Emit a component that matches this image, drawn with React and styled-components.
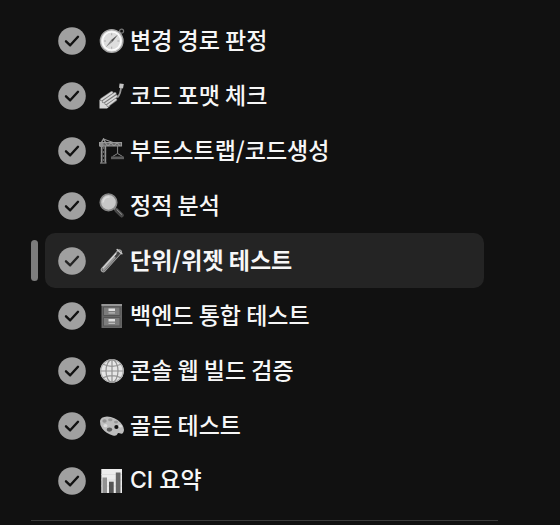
import React from "react";
import styled, { createGlobalStyle } from "styled-components";

const COLORS = {
  page: "#111111",
  active: "#242424",
  marker: "#7d7d7d",
  text: "#f7f7f7",
  badge: "#a0a0a0",
  line: "#3a3a3a",
};

const FONTS = {
  korean: `"Noto Sans CJK KR", sans-serif`,
  latin: `Inter, "Noto Sans CJK KR", sans-serif`,
};

const GlobalStyle = createGlobalStyle`
  * {
    box-sizing: border-box;
  }
  body {
    margin: 0;
    background: ${COLORS.page};
    font-family: ${FONTS.korean};
  }
`;

const Sidebar = styled.nav`
  padding: 13px 62px 0 31px;
`;

const List = styled.ul`
  list-style: none;
  margin: 0;
  padding: 0 0 12px;
  border-bottom: 1px solid ${COLORS.line};
`;

const Item = styled.li`
  display: flex;
  align-items: center;
  gap: 7px;
`;

const Marker = styled.span`
  flex: none;
  width: 7px;
  height: 41px;
  border-radius: 4px;
  background: ${({ $active }) => ($active ? COLORS.marker : "transparent")};
`;

const JobLink = styled.a`
  flex: 1;
  display: flex;
  align-items: center;
  height: 55px;
  margin-right: 14px;
  padding: 0 13px;
  border-radius: 10px;
  color: ${COLORS.text};
  text-decoration: none;
  background: ${({ $active }) => ($active ? COLORS.active : "transparent")};
`;

const Badge = styled.svg`
  flex: none;
  width: 28px;
  height: 28px;
  margin-right: 13px;
`;

const Glyph = styled.svg`
  flex: none;
  width: 26px;
  height: 26px;
  margin-right: 5px;
`;

// the Korean face sits lower in its line box than Inter does
const Label = styled.span`
  padding-bottom: ${({ $latin }) => ($latin ? "1px" : "4px")};
  font-family: ${({ $latin }) => ($latin ? FONTS.latin : FONTS.korean)};
  font-size: 23px;
  font-weight: ${({ $active }) => ($active ? 700 : 500)};
  line-height: 28px;
  white-space: nowrap;
`;

const Check = ({ active }) => (
  <Badge viewBox="0 0 28 28" role="img" aria-label="성공">
    <circle cx="14" cy="14" r="13.8" fill={COLORS.badge} />
    <path
      d="M8 14.3 12.2 18.3 20 9.8"
      fill="none"
      stroke={active ? COLORS.active : COLORS.page}
      strokeWidth="2.4"
      strokeLinecap="round"
      strokeLinejoin="round"
    />
  </Badge>
);

const Compass = () => (
  <Glyph viewBox="0 0 26 26" aria-hidden="true">
    <circle cx="22.6" cy="3.2" r="2" fill="none" stroke="#777" strokeWidth="1.2" />
    <circle cx="12.7" cy="13" r="11.3" fill="#eee" stroke="#a5a5a5" strokeWidth="1.4" />
    <circle cx="12.7" cy="13" r="9" fill="#dedede" stroke="#fff" strokeWidth="1.2" />
    <path d="M12.7 5.3v2M12.7 18.7v2M5 13h2M18.4 13h2" stroke="#aaa" />
    <path d="M19 6.4 13.6 13.8 11.8 12.2Z" fill="#555" />
    <path d="M6.5 19.4 11.8 12.2 13.6 13.8Z" fill="#888" />
  </Glyph>
);

const NailPolish = () => (
  <Glyph viewBox="0 0 26 26" aria-hidden="true">
    <path d="M.5 25.5V17L5 13.5 12 16 11 23 8 25.5Z" fill="#d8d8d8" />
    <path
      d="M2.5 16.5 12.8 9.6M4.5 18.5 16 10.6M7 20.3 17.4 13.2M9 22.3 16.6 16.6"
      stroke="#777"
      strokeWidth="3.2"
      strokeLinecap="round"
    />
    <path
      d="M2.5 16.5 12.8 9.6M4.5 18.5 16 10.6M7 20.3 17.4 13.2M9 22.3 16.6 16.6"
      stroke="#dadada"
      strokeWidth="1.8"
      strokeLinecap="round"
    />
    <path d="M22 4Q21.8 11 18.3 14.5" fill="none" stroke="#999" strokeWidth="1.8" />
    <path d="m20.6.4 4.2.5-.8 4.5-4-.6Z" fill="#c4c4c4" />
  </Glyph>
);

const Crane = () => (
  <Glyph viewBox="0 0 26 26" aria-hidden="true">
    <path d="M2.5 25V4.5L4.5 1 6.5 4.5V25" fill="none" stroke="#969696" strokeWidth="1.4" />
    <path d="m2.5 24 4-4-4-4 4-4-4-4 4-4M6.5 24l-4-4 4-4-4-4 4-4" fill="none" stroke="#858585" strokeWidth=".9" />
    <path d="M.5 4.5H22.5V8H.5Z" fill="#666" />
    <path d="M.5 4.5H22.5V8H.5ZM6 4.5 9 8l3-3.5L15 8l3-3.5L21 8M4.5 1 14 4.5" fill="none" stroke="#979797" strokeWidth="1.1" />
    <path d="M1 5h3.5v4H1Z" fill="#8d8d8d" />
    <path d="M18.6 8v7.5M18.6 15.5l-5 3M18.6 15.5l5 3" fill="none" stroke="#888" />
    <path d="M12 18.5h13v2.7H12Z" fill="#5d5d5d" />
    <path d="M1 25h6.5" stroke="#777" strokeWidth="1.4" />
  </Glyph>
);

const Magnifier = () => (
  <Glyph viewBox="0 0 26 26" aria-hidden="true">
    <path d="m15.5 15 2.5 2.5" stroke="#aaa" strokeWidth="2.5" />
    <path d="m17.5 17.2 5.2 5.1" stroke="#484848" strokeWidth="4.4" strokeLinecap="round" />
    <path d="m17.8 16.6 4.8 4.7" stroke="#999" strokeLinecap="round" />
    <circle cx="9.5" cy="9.4" r="8.2" fill="#c8c8c8" stroke="#858585" strokeWidth="1.7" />
    <path d="M4.2 8.8Q5.2 4 10 4" fill="none" stroke="#dcdcdc" strokeWidth="1.6" strokeLinecap="round" />
  </Glyph>
);

const TestTube = () => (
  <Glyph viewBox="0 0 26 26" aria-hidden="true">
    <path d="M4.3 21.8 20.4 4" stroke="#a5a5a5" strokeWidth="5.2" strokeLinecap="round" />
    <path d="M4.5 21.6 20.5 4.2" stroke="#444" strokeWidth="3.2" strokeLinecap="round" />
    <path d="M4.6 21.5 15.3 9.7" stroke="#999" strokeWidth="2.7" strokeLinecap="round" />
    <path d="m4 20 13-14.3" stroke="#e2e2e2" strokeWidth="1.1" strokeLinecap="round" />
    <path d="m18.2 1.6 4.7 4.2" stroke="#c9c9c9" strokeWidth="1.5" strokeLinecap="round" />
  </Glyph>
);

const Cabinet = () => (
  <Glyph viewBox="0 0 26 26" aria-hidden="true">
    <path d="M2.5 1h20.5v24H2.5Z" fill="#666" />
    <path d="M2.5 1h20.5v2H2.5Z" fill="#969696" />
    <path d="M4.5 4h16.5v8.5H4.5ZM4.5 14.5h16.5V23H4.5Z" fill="#7c7c7c" stroke="#555" />
    <path d="M9.5 5.5h6.5v2.4H9.5ZM9.5 16h6.5v2.4H9.5Z" fill="#e0e0e0" />
    <path d="M9.5 9.8h6.5M9.5 20.3h6.5" stroke="#bbb" strokeWidth="1.2" />
  </Glyph>
);

const Globe = () => (
  <Glyph viewBox="0 0 26 26" aria-hidden="true">
    <circle cx="13" cy="13" r="11.8" fill="#e6e6e6" />
    <g fill="none" stroke="#929292" strokeWidth="1.2">
      <circle cx="13" cy="13" r="11.2" stroke="#b0b0b0" />
      <ellipse cx="13" cy="13" rx="6" ry="11.3" />
      <path d="M13 1.7v22.6M1.7 13h22.6M4 6.3Q13 10.5 22 6.3M4 19.7Q13 15.5 22 19.7" />
    </g>
  </Glyph>
);

const Palette = () => (
  <Glyph viewBox="0 0 26 26" aria-hidden="true">
    <path
      d="M1 8Q1.5 4 8 3.6 16 4 21.5 9.5 26 14.5 24.6 18.8 23.8 21.5 21.5 20.5 18.8 19 18.3 21.3 17.5 23.4 13.8 22.4 7 20.5 3.2 15.5.6 11.5 1 8Z"
      fill="#bebebe"
    />
    <circle cx="17.4" cy="14" r="2.1" fill={COLORS.page} />
    <ellipse cx="5.5" cy="8" rx="2.2" ry="1.8" fill="#929292" />
    <ellipse cx="11.3" cy="6.8" rx="2.2" ry="1.5" fill="#999" />
    <ellipse cx="17" cy="9.1" rx="2" ry="1.4" fill="#989898" />
    <ellipse cx="6.4" cy="12.7" rx="2" ry="1.6" fill="#ddd" />
    <ellipse cx="10.5" cy="16.6" rx="2.7" ry="2.1" fill="#5c5c5c" />
    <ellipse cx="21.4" cy="13.3" rx="1.6" ry="1.3" fill="#ddd" />
  </Glyph>
);

const BarChart = () => (
  <Glyph viewBox="0 0 26 26" aria-hidden="true">
    <path d="M2.3 1h20.7v24H2.3Z" fill="#ececec" />
    <path d="M2.3 6.5H23M2.3 12H23M2.3 18H23" stroke="#dadada" strokeWidth=".8" />
    <path d="M3.5 9.5H8V25H3.5Z" fill="#929292" />
    <path d="M10 13.7h4.7V25H10Z" fill="#555" />
    <path d="M16.8 4.5h4.7V25h-4.7Z" fill="#666" />
  </Glyph>
);

const JOBS = [
  { id: "changes", name: "변경 경로 판정", icon: Compass },
  { id: "format", name: "코드 포맷 체크", icon: NailPolish },
  { id: "bootstrap", name: "부트스트랩/코드생성", icon: Crane },
  { id: "analyze", name: "정적 분석", icon: Magnifier },
  { id: "unit", name: "단위/위젯 테스트", icon: TestTube, active: true },
  { id: "backend", name: "백엔드 통합 테스트", icon: Cabinet },
  { id: "web", name: "콘솔 웹 빌드 검증", icon: Globe },
  { id: "golden", name: "골든 테스트", icon: Palette },
  { id: "summary", name: "CI 요약", icon: BarChart, latin: true },
];

const App = () => (
  <>
    <GlobalStyle />
    <Sidebar>
      <List>
        {JOBS.map(({ id, name, icon: Icon, active, latin }) => (
          <Item key={id}>
            <Marker $active={active} />
            <JobLink href={`#${id}`} $active={active} aria-current={active ? "page" : undefined}>
              <Check active={active} />
              <Icon />
              <Label $active={active} $latin={latin}>
                {name}
              </Label>
            </JobLink>
          </Item>
        ))}
      </List>
    </Sidebar>
  </>
);

export default App;
